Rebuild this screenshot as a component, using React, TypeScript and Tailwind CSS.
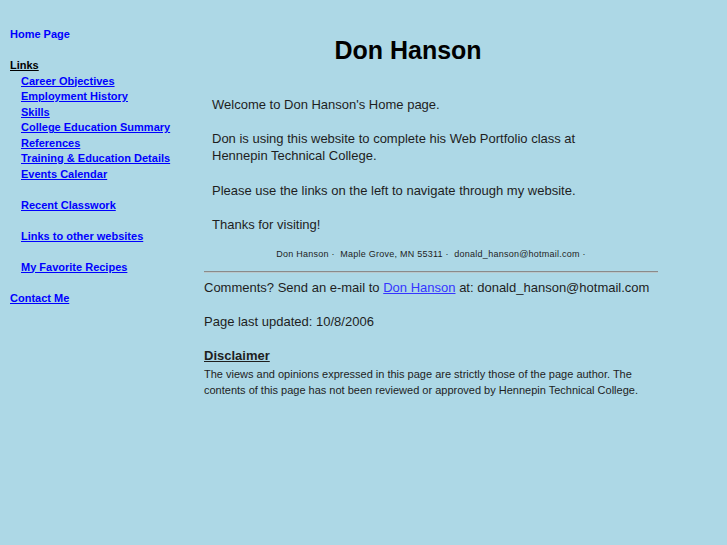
const subLinks = [
  "Career Objectives",
  "Employment History",
  "Skills",
  "College Education Summary",
  "References",
  "Training & Education Details",
  "Events Calendar",
];

function NavLink({ children, indent }: { children: React.ReactNode; indent?: boolean }) {
  return (
    <div className={indent ? "pl-[11px]" : ""}>
      <a href="#" className="font-bold text-[#0000ff] underline">
        {children}
      </a>
    </div>
  );
}

export default function App() {
  return (
    <div
      className="min-h-[545px] w-full bg-[#add8e6] flex text-[#1e1e1e]"
      style={{ fontFamily: '"Liberation Sans", Arial, sans-serif' }}
    >
      <div className="w-[204px] shrink-0 pl-[10px] pt-[27px] text-[11px] leading-[15.5px]">
        <div>
          <a href="#" className="font-bold text-[#0000ff]">
            Home Page
          </a>
        </div>
        <div className="h-[15.5px]" />
        <div className="font-bold text-black underline">Links </div>
        {subLinks.map((l) => (
          <NavLink key={l} indent>
            {l}
          </NavLink>
        ))}
        <div className="h-[15.5px]" />
        <NavLink indent>Recent Classwork</NavLink>
        <div className="h-[15.5px]" />
        <NavLink indent>Links to other websites</NavLink>
        <div className="h-[15.5px]" />
        <NavLink indent>My Favorite Recipes</NavLink>
        <div className="h-[15.5px]" />
        <NavLink>Contact Me</NavLink>
      </div>

      <div className="w-[454px] shrink-0 pt-[36px]">
        <h1 className="w-[408px] text-center text-[25px] leading-[28px] font-bold text-black">
          Don Hanson
        </h1>

        <div className="mt-[31.5px] pl-2 text-[13px] leading-[17px] flex flex-col gap-[17.5px]">
          <p>Welcome to Don Hanson's Home page.</p>
          <p>
            Don is using this website to complete his Web Portfolio class at
            <br />
            Hennepin Technical College.
          </p>
          <p>Please use the links on the left to navigate through my website.</p>
          <p>Thanks for visiting!</p>
        </div>

        <div className="mt-[14.5px] text-center text-[9px] leading-[12px] tracking-[0.25px] whitespace-pre">
          {"Don Hanson ·  Maple Grove, MN 55311 ·  donald_hanson@hotmail.com ·"}
        </div>

        <div className="mt-[11px] h-[2px] bg-[#8a8a8a] border-b border-[#b8c8cc]" />

        <div className="mt-[6.5px] text-[13px] leading-[17px]">
          <p>
            Comments? Send an e-mail to{" "}
            <a href="#" className="text-[#3535ff] underline">
              Don Hanson
            </a>{" "}
            at: donald_hanson@hotmail.com
          </p>
          <p className="mt-[17px]">Page last updated: 10/8/2006</p>
          <p className="mt-[17px] font-bold underline">Disclaimer</p>
        </div>
        <p className="mt-[1.5px] text-[11px] leading-[16px]">
          The views and opinions expressed in this page are strictly those of the page author. The
          contents of this page has not been reviewed or approved by Hennepin Technical College.
        </p>
      </div>
    </div>
  );
}
